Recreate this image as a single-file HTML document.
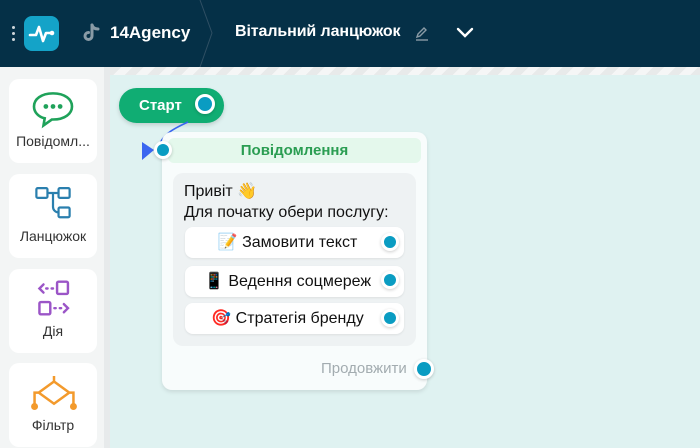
<!DOCTYPE html>
<html><head><meta charset="utf-8"><style>
*{box-sizing:border-box;margin:0;padding:0}
body{width:700px;height:448px;overflow:hidden;font-family:"Liberation Sans","DejaVu Sans",sans-serif;background:#dff2f1;position:relative}
.hdr{position:absolute;left:0;top:0;width:700px;height:67px;background:#053047;color:#fff}
.side{position:absolute;left:0;top:67px;height:381px;background:#f3f5f5;border-right:6px solid #e7eaeb;width:110px}
.card{position:absolute;left:9px;width:88px;height:84px;background:#fff;border-radius:10px;text-align:center;font-size:14px;color:#333}
.card span{position:absolute;left:0;right:0;bottom:14px}
.stripe{position:absolute;left:110px;top:67px;width:590px;height:8px;background:repeating-linear-gradient(135deg,#e8eaea 0 8px,#f5f6f6 8px 16px)}
.dot{position:absolute;width:18px;height:18px;border-radius:50%;background:#0a9cc2;border:3px solid #fff;box-shadow:0 1px 3px rgba(0,0,0,.2)}
.btn{position:absolute;left:185px;width:219px;height:31px;background:#fff;border-radius:8px;box-shadow:0 1px 2px rgba(0,0,0,.08);font-size:16px;color:#111;line-height:31px;text-align:center;padding-right:14px}
</style></head><body>
<div class="hdr">
 <div style="position:absolute;left:12px;top:26px;width:3px;height:3px;background:#cfd6da;border-radius:50%;box-shadow:0 6px 0 #cfd6da,0 12px 0 #cfd6da"></div>
 <div style="position:absolute;left:24px;top:16px;width:35px;height:35px;background:#14a3c8;border-radius:8px">
  <svg width="35" height="35" viewBox="0 0 35 35"><path d="M6 19h6l3-8 4 14 3-8h5" stroke="#fff" stroke-width="2.6" fill="none" stroke-linejoin="round" stroke-linecap="round"/><circle cx="28" cy="17" r="2.3" fill="#fff"/></svg>
 </div>
 <svg style="position:absolute;left:83px;top:23px" width="18" height="20" viewBox="0 0 18 20"><path d="M9 2v11a3.5 3.5 0 1 1-3.5-3.5" stroke="#8a9ba6" stroke-width="3" fill="none" stroke-linecap="round"/><path d="M9 2c1 3 3 4 6 4" stroke="#8a9ba6" stroke-width="3" fill="none" stroke-linecap="round"/></svg>
 <div style="position:absolute;left:110px;top:23px;font-size:17px;font-weight:bold">14Agency</div>
 <svg style="position:absolute;left:198px;top:0" width="16" height="67"><path d="M2 0l12 33L2 67" stroke="#2f4f63" fill="none"/></svg>
 <div style="position:absolute;left:235px;top:23px;font-size:16px;font-weight:bold;letter-spacing:-0.1px">Вітальний ланцюжок</div>
 <svg style="position:absolute;left:414px;top:25px" width="16" height="16" viewBox="0 0 16 16"><path d="M3 12l1-3 6-6 2 2-6 6z" stroke="#8a9ba6" stroke-width="1.4" fill="none"/><path d="M2 15h12" stroke="#8a9ba6" stroke-width="1.4"/></svg>
 <svg style="position:absolute;left:456px;top:27px" width="18" height="12"><path d="M2 2l7 7 7-7" stroke="#fff" stroke-width="2.4" fill="none" stroke-linecap="round"/></svg>
</div>
<div class="side">
 <div class="card" style="top:12px"><svg style="position:absolute;left:22px;top:12px" width="44" height="38" viewBox="2 1 36 32"><path d="M20 3C10 3 4 8 4 14c0 5 4 9 9 10l-1 6 7-5h1c10 0 16-5 16-11S30 3 20 3z" stroke="#1fa25a" stroke-width="2.2" fill="none"/><circle cx="14" cy="14" r="2" fill="#1fa25a"/><circle cx="20" cy="14" r="2" fill="#1fa25a"/><circle cx="26" cy="14" r="2" fill="#1fa25a"/></svg><span>Повідомл...</span></div>
 <div class="card" style="top:107px"><svg style="position:absolute;left:20px;top:10px" width="48" height="36" viewBox="8 2 28 26"><g stroke="#2a7fae" stroke-width="1.6" fill="none"><rect x="10" y="5" width="8" height="7" rx="1"/><rect x="26" y="5" width="8" height="7" rx="1"/><rect x="26" y="19" width="8" height="7" rx="1"/><path d="M18 8.5h8M22 8.5v10a4 4 0 0 0 4 4"/></g></svg><span>Ланцюжок</span></div>
 <div class="card" style="top:202px"><svg style="position:absolute;left:22px;top:10px" width="44" height="38" viewBox="10 2 26 28"><g stroke="#9b55c7" stroke-width="1.8" fill="none" stroke-linecap="round"><path d="M16 6l-3 3 3 3M18 9h1M22 9h1"/><rect x="26" y="4" width="8" height="9" rx="1"/><rect x="13" y="19" width="8" height="9" rx="1"/><path d="M24 23.5h1M28 23.5h1M31 20.5l3 3-3 3"/></g></svg><span>Дія</span></div>
 <div class="card" style="top:296px"><svg style="position:absolute;left:20px;top:10px" width="50" height="42" viewBox="2 0 36 30"><g stroke="#f39a2c" stroke-width="1.8" fill="none"><path d="M20 2v4M20 6l-11 8 11 8 11-8zM9 14H6v8M31 14h3v8"/></g><circle cx="6" cy="24" r="2.5" fill="#f39a2c"/><circle cx="34" cy="24" r="2.5" fill="#f39a2c"/></svg><span>Фільтр</span></div>
</div>
<div class="stripe"></div>
<div style="position:absolute;left:119px;top:88px;width:105px;height:35px;background:#10ad73;border-radius:18px;box-shadow:0 2px 4px rgba(0,0,0,.15);color:#fff;font-weight:bold;font-size:15px;line-height:35px;padding-left:20px">Старт</div>
<div class="dot" style="left:195px;top:94px;width:20px;height:20px"></div>
<svg style="position:absolute;left:140px;top:120px" width="60" height="45"><path d="M48 2C35 8 22 14 18 28" stroke="#3a66f0" stroke-width="1.6" fill="none"/><path d="M2 22l12 8-12 10z" fill="#3a66f0"/></svg>
<div style="position:absolute;left:162px;top:132px;width:265px;height:258px;background:#f8fcfc;border-radius:10px;box-shadow:0 2px 4px rgba(0,0,0,.1)"></div>
<div style="position:absolute;left:168px;top:138px;width:253px;height:25px;background:#e4f8ec;border-radius:6px;text-align:center;color:#2a9d52;font-weight:bold;font-size:15px;line-height:25px">Повідомлення</div>
<div class="dot" style="left:154px;top:141px"></div>
<div style="position:absolute;left:173px;top:173px;width:243px;height:173px;background:#eef2f3;border-radius:10px"></div>
<div style="position:absolute;left:184px;top:181px;font-size:16px;line-height:21px;color:#111">Привіт 👋<br>Для початку обери послугу:</div>
<div class="btn" style="top:227px">📝 Замовити текст</div>
<div class="btn" style="top:266px">📱 Ведення соцмереж</div>
<div class="btn" style="top:303px">🎯 Стратегія бренду</div>
<div class="dot" style="left:381px;top:233px"></div>
<div class="dot" style="left:381px;top:271px"></div>
<div class="dot" style="left:381px;top:309px"></div>
<div style="position:absolute;left:321px;top:360px;font-size:15px;color:#a3acb0">Продовжити</div>
<div class="dot" style="left:414px;top:359px;width:20px;height:20px"></div>
</body></html>
